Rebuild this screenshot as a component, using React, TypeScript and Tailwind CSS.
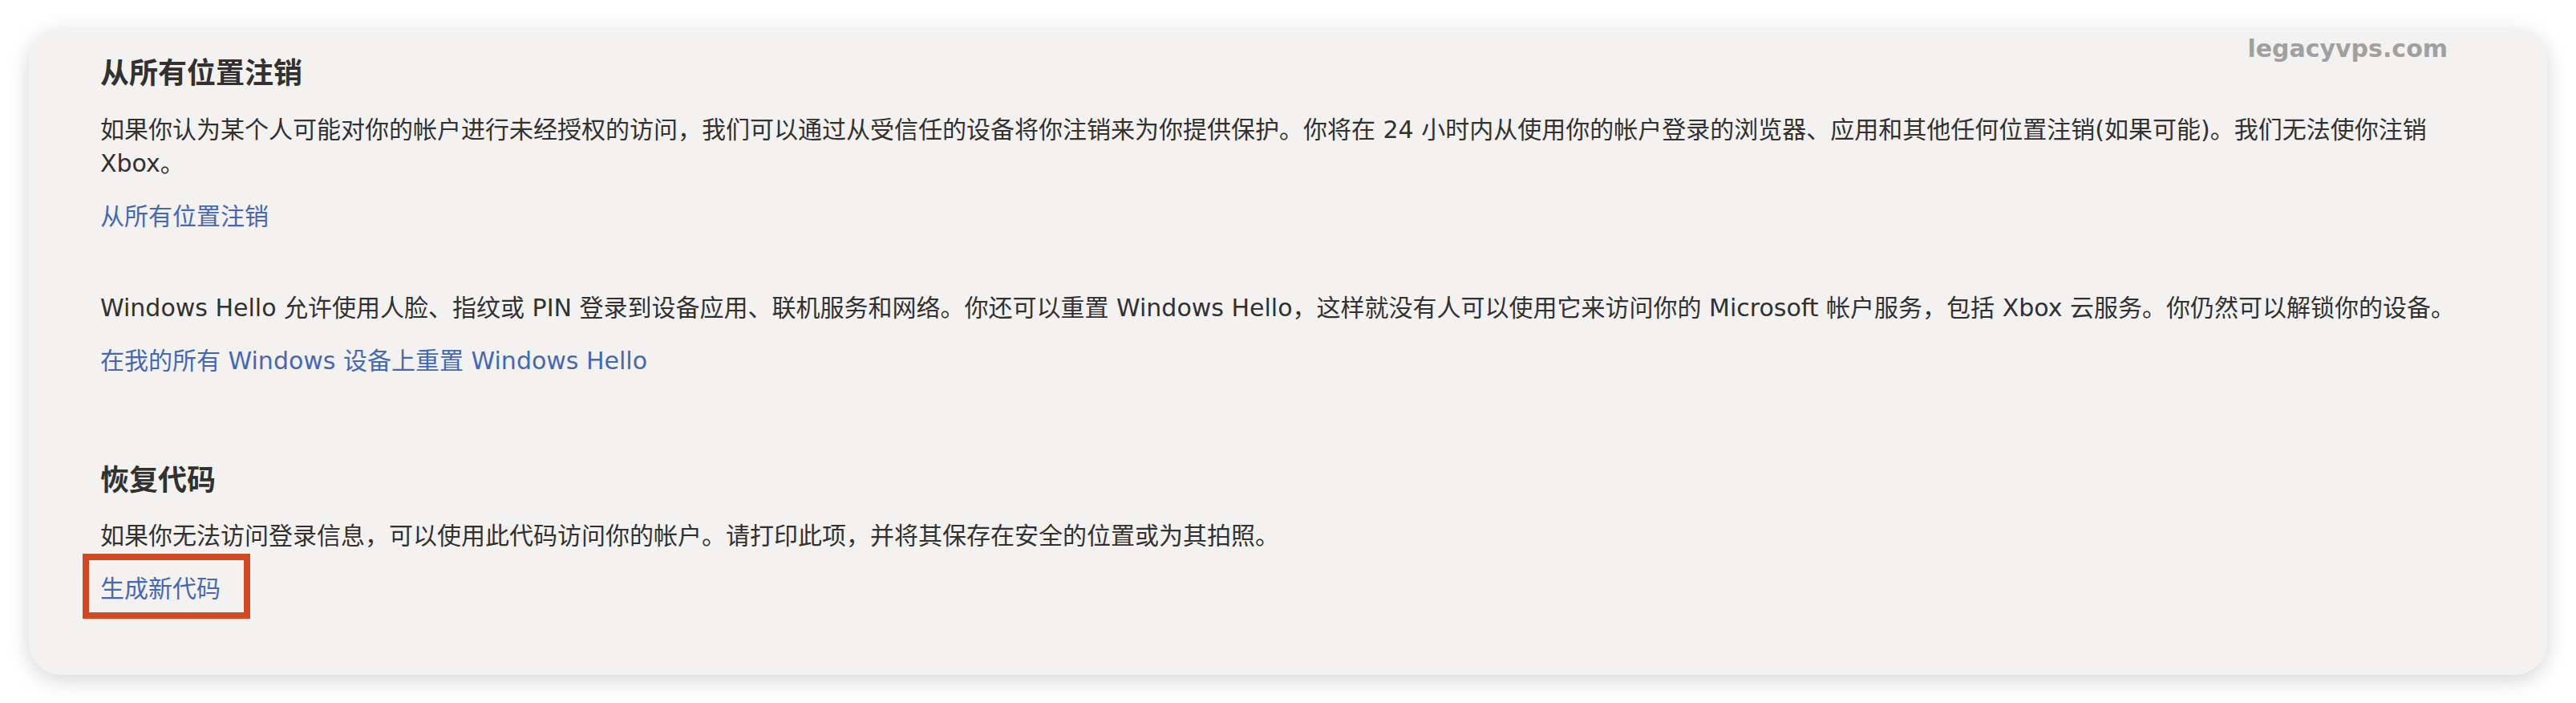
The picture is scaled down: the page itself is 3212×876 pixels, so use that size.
export default function App() {
  return (
    <div className="relative min-h-[876px] w-full bg-white px-[36px] pt-[36px] pb-[36px] font-['DejaVu_Sans','Noto_Sans_CJK_SC',sans-serif]">
      <div className="rounded-[40px] bg-[#f3f2f1] shadow-[0_6px_26px_rgba(0,0,0,0.17)] pl-[89px] pr-[89px] pt-[32px] pb-[86px] text-[#323130]">
        <h2 className="text-[36px] leading-[48px] font-bold">从所有位置注销</h2>
        <p className="mt-[25px] text-[30px] leading-[42px]">
          如果你认为某个人可能对你的帐户进行未经授权的访问，我们可以通过从受信任的设备将你注销来为你提供保护。你将在 24 小时内从使用你的帐户登录的浏览器、应用和其他任何位置注销(如果可能)。我们无法使你注销
          <br />
          Xbox。
        </p>
        <a href="#" className="mt-[24px] block w-fit text-[30px] leading-[42px] text-[#4668b3]">
          从所有位置注销
        </a>
        <p className="mt-[72px] text-[30px] leading-[42px]">
          Windows Hello 允许使用人脸、指纹或 PIN 登录到设备应用、联机服务和网络。你还可以重置 Windows Hello，这样就没有人可以使用它来访问你的 Microsoft 帐户服务，包括 Xbox 云服务。你仍然可以解锁你的设备。
        </p>
        <a href="#" className="mt-[24px] block w-fit text-[30px] leading-[42px] text-[#4668b3]">
          在我的所有 Windows 设备上重置 Windows Hello
        </a>
        <h2 className="mt-[104px] text-[36px] leading-[48px] font-bold">恢复代码</h2>
        <p className="mt-[24px] text-[30px] leading-[42px]">
          如果你无法访问登录信息，可以使用此代码访问你的帐户。请打印此项，并将其保存在安全的位置或为其拍照。
        </p>
        <div className="relative mt-[24px] w-fit">
          <a href="#" className="block text-[30px] leading-[42px] text-[#4668b3]">
            生成新代码
          </a>
          <span className="pointer-events-none absolute left-[-22px] top-[-23px] h-[81px] w-[209px] border-[8px] border-[#cf4a22]" />
        </div>
      </div>
      <div className="absolute right-[160px] top-[46px] text-[30px] leading-[30px] font-bold text-[#a0a0a0]">
        legacyvps.com
      </div>
    </div>
  );
}
